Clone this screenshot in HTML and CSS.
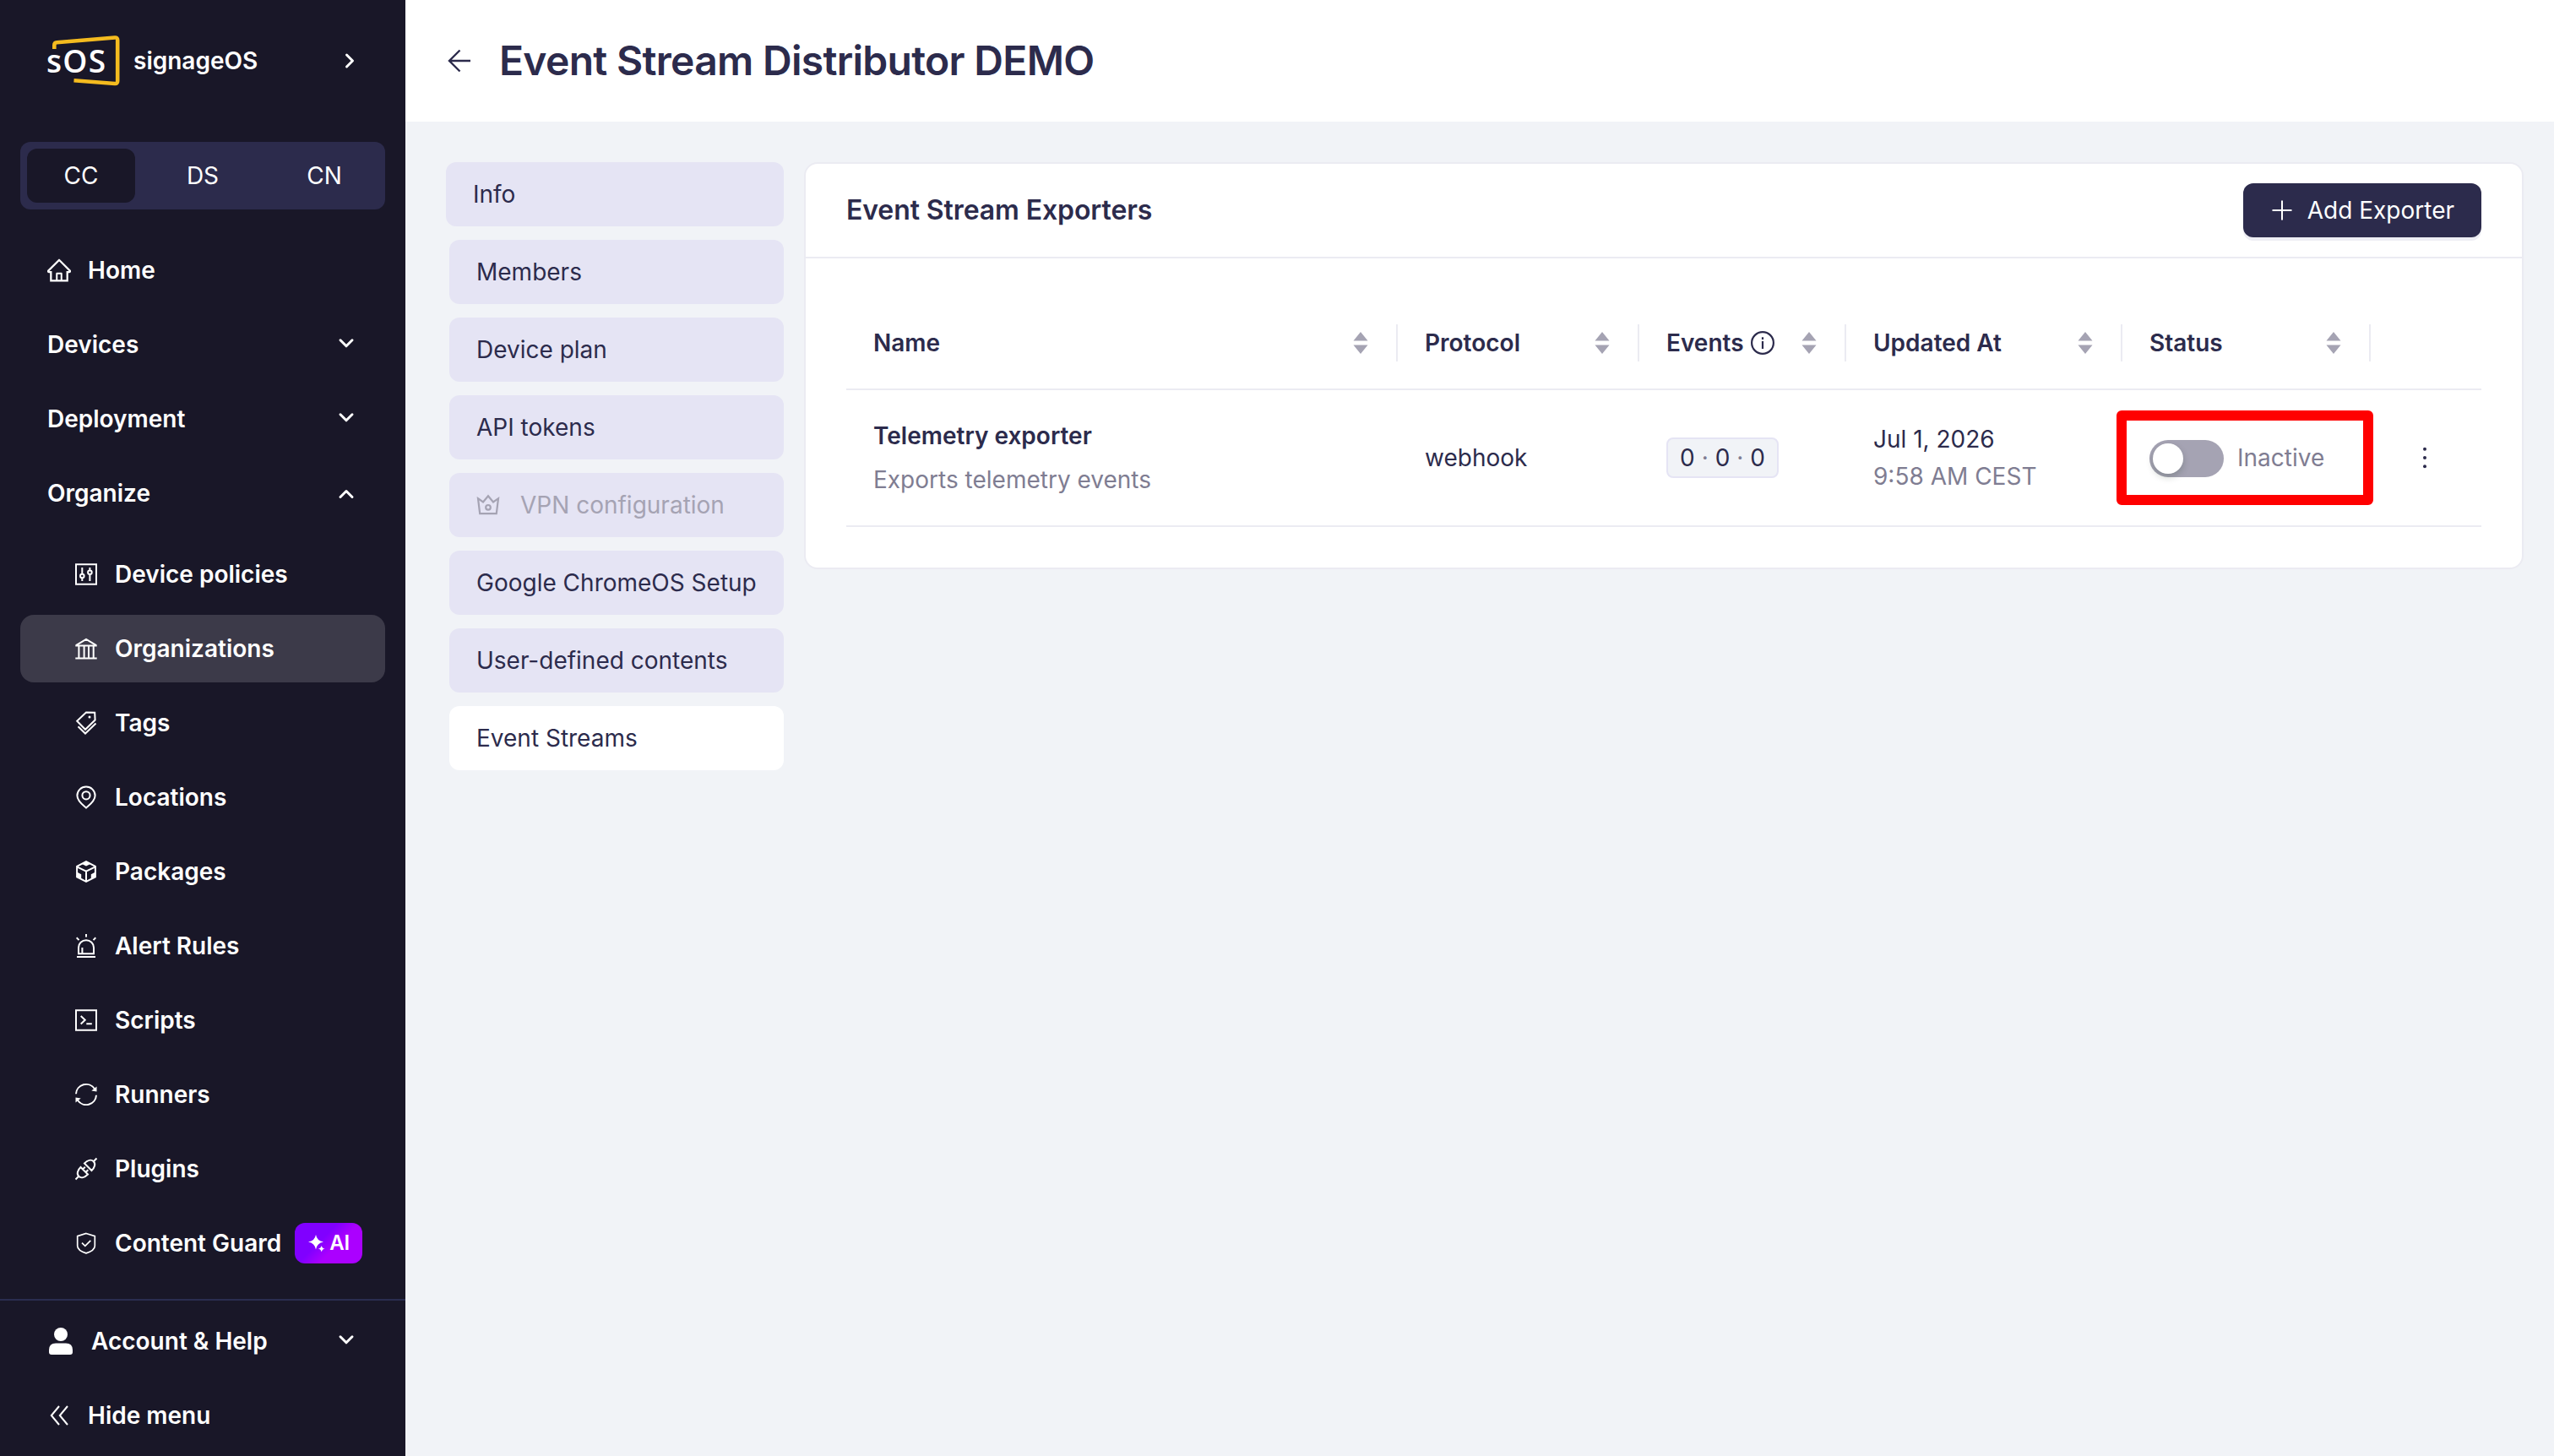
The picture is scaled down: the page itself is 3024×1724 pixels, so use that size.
FILE: index.html
```
<!DOCTYPE html>
<html lang="en">
<head>
    <meta charset="UTF-8">
    <meta name="viewport" content="width=device-width, initial-scale=1.0">
    <title>Event Stream Distributor DEMO | signageOS</title>
    <link rel="stylesheet" href="styles.css">
</head>
<body>

    <aside class="sidebar">
        <div class="brand">
            <div class="logo">
                <svg viewBox="0 0 88 64" width="88" height="64" fill="none" stroke="#f4bb1f" stroke-width="4.6">
                    <path d="M8.300 18v-4.500q0-3 3-3.200L80 4.500q3.200-.2 3.200 3V56q0 3.200-3.200 3L31.500 55.300"/>
                </svg>
                <span class="logo-text">sOS</span>
            </div>
            <span class="brand-name">signageOS</span>
            <svg class="chevron" viewBox="0 0 20 20" width="20" height="20"><path d="M6.500 3l7 7-7 7"/></svg>
        </div>

        <div class="switcher">
            <span class="switch active">CC</span>
            <span class="switch">DS</span>
            <span class="switch">CN</span>
        </div>

        <nav class="menu">
            <a class="item">
                <svg class="icon filled" viewBox="64 64 896 896"><path d="M946.5 505L560.1 118.8l-25.9-25.9a31.5 31.5 0 00-44.4 0L77.5 505a63.9 63.9 0 00-18.8 46c.4 35.2 29.7 63.3 64.9 63.3h42.5V940h691.8V614.3h43.4c17.1 0 33.2-6.7 45.3-18.8a63.6 63.6 0 0018.7-45.3c0-17-6.7-33.1-18.8-45.2zM568 868H456V664h112v204zm217.9-325.7V868H632V640c0-22.1-17.9-40-40-40H432c-22.1 0-40 17.9-40 40v228H238.1V542.3h-96l370-369.700 23.100 23.100L882 542.300h-96.100z"/></svg>
                Home
            </a>
            <a class="item">Devices <svg class="chevron" viewBox="0 0 20 20" width="20" height="20"><path d="M3 4.800l7 7 7-7"/></svg></a>
            <a class="item">Deployment <svg class="chevron" viewBox="0 0 20 20" width="20" height="20"><path d="M3 4.800l7 7 7-7"/></svg></a>
            <a class="item">Organize <svg class="chevron" viewBox="0 0 20 20" width="20" height="20"><path d="M3 14.500l7-7 7 7"/></svg></a>

            <div class="submenu">
                <a class="item">
                    <svg class="icon" viewBox="0 0 28 28"><path d="M2 2.300h24v23.400H2zM9.300 6v7.700M9.300 18.300V22M18.400 6v3.400M18.400 14v8"/><circle cx="9.300" cy="16" r="2.300"/><circle cx="18.400" cy="11.700" r="2.300"/></svg>
                    Device policies
                </a>
                <a class="item selected">
                    <svg class="icon" viewBox="0 0 28 28"><path d="M1.300 10.500h25.400M2 10.200l12-7.400 12 7.400M5.400 11v14M11.600 11v14M17 11v14M22.700 11v14M1.300 25.500h25.400"/></svg>
                    Organizations
                </a>
                <a class="item">
                    <svg class="icon" viewBox="0 0 28 28"><path d="M14 1.500l10.200.3.400 8.700L13 21.800 3.200 11.800zM4.500 18.200l8.500 8.300 12.500-12"/><circle class="dot" cx="18" cy="7" r="1.500"/></svg>
                    Tags
                </a>
                <a class="item">
                    <svg class="icon" viewBox="0 0 28 28"><path d="M14 26.600C10 23.200 3.400 18.400 3.400 12a10.600 10.400 0 0121.200 0c0 6.400-6.600 11.200-10.600 14.600z"/><circle cx="14" cy="11.800" r="4.600"/></svg>
                    Locations
                </a>
                <a class="item">
                    <svg class="icon" viewBox="0 0 28 28"><path d="M14 2.200l10.900 5.600v12.600L14 26 3.100 20.400V7.800zM3.100 8.300L14 13.700l10.900-5.400M14 13.700V26"/><path class="dot" d="M14 1.800l5.500 3L14 7.600 8.500 4.800zM3 14.500l5.200 2.700v5.600L3 20.200zM25 14.500l-5.200 2.700v5.600l5.200-2.600z"/></svg>
                    Packages
                </a>
                <a class="item">
                    <svg class="icon" viewBox="0 0 28 28"><path d="M5 23.200V16a9 8.800 0 0118 0v7.200zM14 0v3.400M2.700 4.300l2.800 2.800M25.300 4.300l-2.800 2.800M9.400 16v6.500M3 27h22"/></svg>
                    Alert Rules
                </a>
                <a class="item">
                    <svg class="icon" viewBox="0 0 28 28"><path d="M2 2.300h24v23.400H2zM7.700 9l5 4.700-5 4.700M14.300 18.200h6.500"/></svg>
                    Scripts
                </a>
                <a class="item">
                    <svg class="icon" viewBox="0 0 28 28"><path d="M2 13.300A12 12 0 0124 7.300M26 14.700A12 12 0 014 20.700"/><path class="dot" d="M26.500 4.600v6l-6.200-1.200zM1.500 23.400v-6l6.200 1.200z"/></svg>
                    Runners
                </a>
                <a class="item">
                    <svg class="icon" viewBox="0 0 28 28"><path d="M1.500 26.500l3.700-3.700M26.500 1.500l-3.700 3.700M7.500 12l8.500 8.500c-3.700 3.700-8 5-10.800 2.300C2.500 20 3.800 15.500 7.500 12zM12 7.500l8.500 8.500c3.700-3.500 5-8 2.300-10.800C20 2.500 15.700 3.800 12 7.500zM10 14.500l2.800-2.800M13.500 18l2.800-2.800"/></svg>
                    Plugins
                </a>
                <a class="item">
                    <svg class="icon thin" viewBox="0 0 28 28"><path d="M14 2.500l10.300 3.200v11.500c0 4-5.300 7-10.300 8.700-5-1.700-10.300-4.700-10.300-8.700V5.700zM9 13.600l3.800 3.700 6.500-6.500"/></svg>
                    Content Guard
                    <span class="ai-badge">
                        <svg viewBox="0 0 22 22" width="22" height="22"><path d="M10 1q1.300 7.300 9 8.600-7.700 1.300-9 9-1.300-7.700-9-9Q8.700 8.300 10 1zM16.700 14q.7 3 4 3.600-3.300.6-4 4-.7-3.400-4-4 3.300-.6 4-3.600z"/></svg>
                        AI
                    </span>
                </a>
            </div>
        </nav>

        <div class="bottom">
            <a class="item account">
                <svg class="person" viewBox="0 0 28 32" width="28" height="32"><circle cx="14" cy="8" r="8"/><path d="M8 18.500h12q8 0 8 8V29q0 3-3 3H3q-3 0-3-3v-2.500q0-8 8-8z"/></svg>
                Account &amp; Help
                <svg class="chevron" viewBox="0 0 20 20" width="20" height="20"><path d="M3 4.800l7 7 7-7"/></svg>
            </a>
            <a class="item">
                <svg class="icon" viewBox="0 0 28 28"><path d="M14 3L4.800 14 14 25M24 3l-9.200 11L24 25"/></svg>
                Hide menu
            </a>
        </div>
    </aside>

    <div class="page">
        <header class="page-header">
            <svg viewBox="0 0 28 28" width="28" height="28"><path d="M27 14H2M14.500 1.500L2 14l12.500 12.500"/></svg>
            <h1>Event Stream Distributor DEMO</h1>
        </header>

        <main class="content">
            <ul class="tabs">
                <li class="first">Info</li>
                <li>Members</li>
                <li>Device plan</li>
                <li>API tokens</li>
                <li class="disabled">
                    <svg viewBox="0 0 28 28" width="28" height="28"><path d="M2 6.200l6 4.200 6-7.200 6 7.200 6-4.200-2.200 18H4.200z"/><circle cx="14" cy="16.800" r="2.800"/></svg>
                    VPN configuration
                </li>
                <li>Google ChromeOS Setup</li>
                <li>User-defined contents</li>
                <li class="current">Event Streams</li>
            </ul>

            <section class="card">
                <div class="card-head">
                    <h2>Event Stream Exporters</h2>
                    <button class="add-btn">
                        <svg viewBox="0 0 24 24" width="24" height="24"><path d="M12 .5v23M.5 12h23"/></svg>
                        Add Exporter
                    </button>
                </div>
                <div class="card-body">
                    <div class="row head">
                        <div class="cell">Name <svg class="sorter" viewBox="0 0 22 28"><path d="M11 1l8.500 10.500h-17zM11 27l8.500-10.500h-17z"/></svg></div>
                        <div class="cell">Protocol <svg class="sorter" viewBox="0 0 22 28"><path d="M11 1l8.500 10.500h-17zM11 27l8.500-10.500h-17z"/></svg></div>
                        <div class="cell">Events
                            <svg class="info" viewBox="0 0 28 28" width="28" height="28"><circle cx="14" cy="14" r="12.900"/><path d="M14 12v9M14 7.300v2.700"/></svg>
                            <svg class="sorter" viewBox="0 0 22 28"><path d="M11 1l8.500 10.500h-17zM11 27l8.500-10.500h-17z"/></svg></div>
                        <div class="cell">Updated At <svg class="sorter" viewBox="0 0 22 28"><path d="M11 1l8.500 10.500h-17zM11 27l8.500-10.500h-17z"/></svg></div>
                        <div class="cell">Status <svg class="sorter" viewBox="0 0 22 28"><path d="M11 1l8.500 10.500h-17zM11 27l8.500-10.500h-17z"/></svg></div>
                        <div class="cell"></div>
                    </div>
                    <div class="row">
                        <div class="cell stack exporter">
                            <strong>Telemetry exporter</strong>
                            <span class="muted">Exports telemetry events</span>
                        </div>
                        <div class="cell">webhook</div>
                        <div class="cell"><span class="tag">0<i>·</i>0<i>·</i>0</span></div>
                        <div class="cell stack">
                            <span>Jul 1, 2026</span>
                            <span class="muted">9:58 AM CEST</span>
                        </div>
                        <div class="cell status">
                            <span class="toggle"><span class="knob"></span></span>
                            <span class="muted">Inactive</span>
                            <div class="highlight"></div>
                        </div>
                        <div class="cell more">
                            <svg viewBox="0 0 8 28" width="8" height="28"><circle cx="4" cy="3.800" r="2"/><circle cx="4" cy="14" r="2"/><circle cx="4" cy="24.200" r="2"/></svg>
                        </div>
                    </div>
                </div>
            </section>
        </main>
    </div>

</body>
</html>
```
FILE: styles.css
```
* { box-sizing: border-box; }
body { margin: 0; display: flex; width: 3024px; height: 1724px; overflow: hidden; font-family: Inter, "Liberation Sans", sans-serif; font-size: 28px; line-height: 44px; color: #2c2b4c; background: #f1f3f7; }
h1, h2 { margin: 0; font-weight: 600; }
svg { flex: none; }

/* sidebar */
.sidebar { width: 480px; flex: none; display: flex; flex-direction: column; background: #191728; color: #fff; }
.brand { display: flex; align-items: center; height: 144px; padding: 0 56px; font-weight: 600; }
.logo { position: relative; width: 88px; height: 64px; margin-right: 14px; }
.logo-text { position: absolute; left: -1px; top: 10px; font: 600 37px/44px "Open Sans", sans-serif; letter-spacing: 1.3px; }
.chevron { margin-left: auto; fill: none; stroke: #fff; stroke-width: 3; stroke-linecap: round; stroke-linejoin: round; }
.brand .chevron { margin-right: 0; }

.switcher { display: flex; margin: 24px 24px 32px; height: 80px; background: #2c2b4c; border-radius: 12px; }
.switch { flex: 1; margin: 8px; text-align: center; line-height: 64px; border-radius: 12px; }
.switch.active { background: #191728; }

.menu { flex: 1; display: flex; flex-direction: column; gap: 8px; padding: 0 24px; }
.item { display: flex; align-items: center; height: 80px; padding: 0 36px 0 32px; border-radius: 16px; font-weight: 600; white-space: nowrap; }
.submenu { display: flex; flex-direction: column; gap: 8px; margin-top: 8px; }
.submenu .item { padding: 0 0 0 64px; }
.item.selected { background: #3c3a49; }
.icon { width: 28px; height: 28px; margin-right: 20px; fill: none; stroke: #fff; stroke-width: 2; }
.icon.thin { stroke-width: 1.7; }
.icon.filled { fill: #fff; stroke: none; }
.dot { fill: #fff; stroke: none; }
.ai-badge { flex: none; display: flex; align-items: center; justify-content: center; gap: 4px; width: 80px; height: 48px; margin-left: 16px; border-radius: 12px; font-size: 24px; background: linear-gradient(135deg, #8000ff 40%, #ab00ff 60%); }
.ai-badge svg { fill: #fff; }
.bottom { flex: none; display: flex; flex-direction: column; gap: 8px; height: 186px; padding: 8px 24px 0; border-top: 2px solid #2a2d50; }
.person { margin: 0 22px 0 2px; fill: #fff; }

/* page */
.page { flex: 1; display: flex; flex-direction: column; }
.page-header { display: flex; align-items: center; height: 144px; padding: 0 50px; background: #fff; }
.page-header svg { margin-right: 33px; fill: none; stroke: #2c2b4c; stroke-width: 2.4; }
h1 { font-size: 48px; line-height: 64px; letter-spacing: -0.7px; }
.content { display: flex; align-items: flex-start; gap: 24px; padding: 48px 36px 0 48px; }

.tabs { list-style: none; margin: 0; padding: 0; width: 400px; flex: none; display: flex; flex-direction: column; gap: 16px; }
.tabs li { display: flex; align-items: center; height: 76px; margin-left: 4px; padding: 0 32px; background: #e5e4f4; border-radius: 12px; white-space: nowrap; }
.tabs li.first { margin-left: 0; }
.tabs li.current { background: #fff; }
.tabs li.disabled { color: #a5a3b3; }
.tabs svg { margin-right: 24px; fill: none; stroke: #a5a3b3; stroke-width: 2.2; }

/* card */
.card { flex: 1; background: #fff; border: 2px solid #ebebf2; border-radius: 16px; }
.card-head { display: flex; align-items: center; justify-content: space-between; height: 112px; padding: 0 48px; border-bottom: 2px solid #ebebf2; }
h2 { font-size: 32px; letter-spacing: -0.1px; }
.add-btn { display: flex; align-items: center; justify-content: space-between; width: 282px; height: 64px; padding: 0 32px 0 34px; border: 0; border-radius: 12px; background: #2c2b4c; color: #fff; font: inherit; box-shadow: 0 4px 0 #eeeef4; }
.add-btn svg { stroke: #fff; stroke-width: 2; }
.card-body { padding: 48px; }

.row { display: grid; grid-template-columns: 653px 286px 245px 327px 294px 1fr; height: 162px; border-bottom: 2px solid #ebebf2; }
.row.head { height: 108px; font-weight: 600; }
.cell { position: relative; display: flex; align-items: center; padding: 0 32px; white-space: nowrap; }
.head .cell { padding: 0 33px 2px 32px; }
.head .cell::after { content: ""; position: absolute; right: 0; top: 30px; width: 2px; height: 44px; background: #ebebf2; }
.head .cell:last-child::after { display: none; }
.sorter { width: 22px; height: 28px; margin-left: auto; fill: #a5a3b3; }
.info { margin-left: 8px; fill: none; stroke: #2c2b4c; stroke-width: 2.2; }
.stack { flex-direction: column; align-items: flex-start; justify-content: center; }
.exporter { gap: 8px; }
strong { font-weight: 600; }
.muted { color: #7f7d92; }
.tag { display: flex; align-items: center; justify-content: space-between; width: 133px; height: 48px; padding: 0 14px; border: 2px solid #e5e4f4; border-radius: 8px; background: #f1f3f7; }
.tag i { font-style: normal; color: #7f7d92; }
.toggle { width: 88px; height: 44px; margin: 2px 16px 0 0; padding: 4px; border-radius: 22px; background: #a5a3b3; }
.knob { display: block; width: 36px; height: 36px; border-radius: 50%; background: #fff; box-shadow: 0 4px 8px rgba(0, 35, 11, 0.2); }
.highlight { position: absolute; left: -7px; top: 24px; width: 304px; height: 112px; border: 12px solid #f00; border-radius: 6px; }
.more { justify-content: center; padding: 0 4px 0 0; }
.more svg { fill: #2c2b4c; }
```
